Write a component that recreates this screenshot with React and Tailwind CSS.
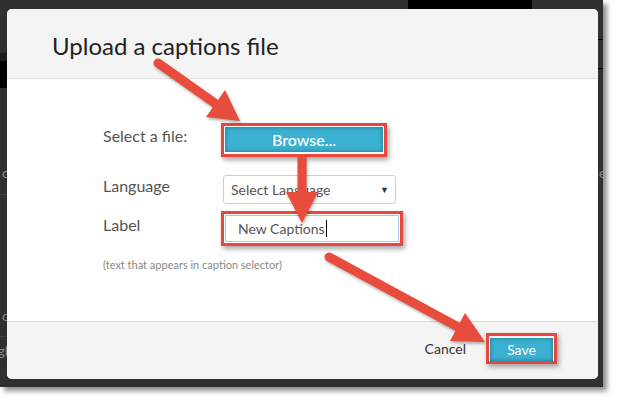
import React from 'react';

const RED = '#e74c3c';

const Highlight = ({ className = '', children }) => (
  <div className={`border-[3px] border-[#e8473d] p-px shadow-[2px_3px_5px_rgba(0,0,0,0.35)] ${className}`}>
    {children}
  </div>
);

const Arrows = () => (
  <svg
    className="absolute left-0 top-0 pointer-events-none"
    width="618"
    height="403"
    viewBox="0 0 618 403"
    style={{ filter: 'drop-shadow(1px 2px 1.5px rgba(0,0,0,0.3))' }}
  >
    <g stroke={RED} strokeWidth="9" strokeLinecap="round" fill="none">
      <line x1="158" y1="63" x2="216" y2="104" />
      <line x1="302" y1="159" x2="302" y2="196" />
      <line x1="329" y1="257" x2="458" y2="327" />
    </g>
    <g fill={RED}>
      <polygon points="240,121 206,117 225,90" />
      <polygon points="302,223 286,192 318,192" />
      <polygon points="485,342 450,341 465,313" />
    </g>
  </svg>
);

const App = () => {
  return (
    <div className="relative w-[618px] h-[403px] bg-white overflow-hidden font-['Lato',sans-serif]">
      {/* page behind the dialog */}
      <div className="w-[603px] h-[387px] bg-[#303030] shadow-[4px_4px_5px_rgba(0,0,0,0.45)] flex flex-col">
        <div className="h-[9px] flex">
          <div className="ml-[408px] w-[124px] h-full bg-black" />
        </div>
        <div className="flex-1 flex">
          <div className="w-[7px] flex flex-col overflow-hidden text-[#8a8a8a] text-[14px] leading-[16px]">
            <div className="h-[44px]" />
            <div className="h-[8px] bg-[#1c1c1c]" />
            <div className="h-[27px] bg-black" />
            <div className="h-[77px]" />
            <div className="h-[16px] flex justify-end"><span className="-mr-[3px]">o</span></div>
            <div className="h-[13px]" />
            <div className="h-px bg-[#444]" />
            <div className="h-[113px]" />
            <div className="h-[16px] flex justify-end"><span className="-mr-[3px]">o</span></div>
            <div className="h-[12px]" />
            <div className="h-px bg-[#444]" />
            <div className="h-[6px]" />
            <div className="h-[16px] flex justify-end"><span className="-mr-[1px]">gl</span></div>
          </div>
          <div className="ml-auto w-[5px] flex flex-col overflow-hidden text-[#8a8a8a] text-[14px] leading-[16px]">
            <div className="h-[30px]" />
            <div className="h-px bg-black" />
            <div className="h-[28px]" />
            <div className="h-px bg-black" />
            <div className="h-[96px]" />
            <div className="h-[16px] flex"><span className="ml-[1px]">e</span></div>
          </div>
        </div>
      </div>

      {/* dialog */}
      <div className="absolute left-[7px] top-[9px] w-[591px] h-[370px] rounded-[5px] overflow-hidden bg-white flex flex-col">
        <div className="h-[70px] shrink-0 bg-[#f4f4f4] border-b border-[#e2e2e2] pl-[45px] pt-[21px]">
          <h1 className="text-[24px] leading-[32px] text-[#222]">Upload a captions file</h1>
        </div>

        <div className="flex-1 pt-[44px] pl-[96px] text-[16px] leading-[20px] text-[#555]">
          <div className="flex items-start">
            <div className="w-[118px] pt-[3px]">Select a file:</div>
            <Highlight className="w-[166px] h-[34px]">
              <button className="w-full h-[25px] bg-[#3cb1d1] text-white text-[16px] leading-[25px] font-medium shadow-[inset_0_0_4px_rgba(0,60,80,0.55)]">
                Browse...
              </button>
            </Highlight>
          </div>

          <div className="flex items-start mt-[18px]">
            <div className="w-[118px] pt-px">Language</div>
            <div className="ml-[2px] w-[173px] h-[29px] border border-[#cfcfcf] rounded-[3px] bg-white flex items-center pl-[7px] pr-[6px] text-[14px] text-[#555]">
              <span className="flex-1">Select Language</span>
              <span className="text-[9px] text-[#333]">▼</span>
            </div>
          </div>

          <div className="flex items-start mt-[7px]">
            <div className="w-[118px] pt-[4px]">Label</div>
            <Highlight className="w-[182px] h-[35px]">
              <div className="w-full h-full border border-[#a9c5ea] bg-white flex items-center pl-[12px] text-[14px] text-[#555]">
                New Captions
                <span className="inline-block w-px h-[17px] bg-black ml-px" />
              </div>
            </Highlight>
          </div>

          <p className="mt-[11px] text-[11px] leading-[16px] text-[#888]">(text that appears in caption selector)</p>
        </div>

        <div className="h-[58px] shrink-0 bg-[#f4f4f4] border-t border-[#dcdcdc] flex items-start justify-end pr-[41px] pt-[11px] gap-[20px]">
          <span className="mt-[6px] text-[14px] leading-[20px] text-[#333]">Cancel</span>
          <Highlight className="w-[71px] h-[31px]">
            <button className="w-full h-[23px] bg-[#3cb1d1] text-white text-[14px] leading-[23px] shadow-[inset_0_0_4px_rgba(0,60,80,0.55)]">
              Save
            </button>
          </Highlight>
        </div>
      </div>

      <Arrows />
    </div>
  );
};

export default App;
